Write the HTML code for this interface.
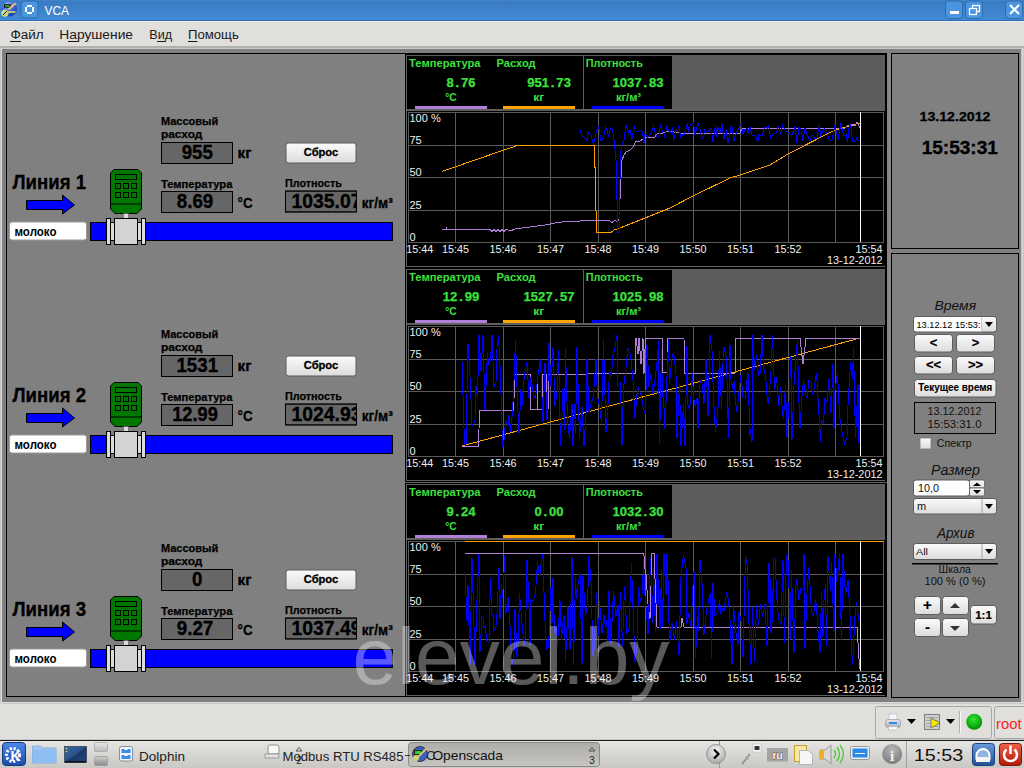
<!DOCTYPE html>
<html><head><meta charset="utf-8"><style>
html,body{margin:0;padding:0;width:1024px;height:768px;overflow:hidden;background:#e0dfdc}
svg{display:block}
text{font-family:"Liberation Sans", sans-serif}
</style></head><body>
<svg width="1024" height="768" viewBox="0 0 1024 768" shape-rendering="auto">
<rect x="0" y="0" width="1024" height="768" fill="#e0dfdc" />
<defs><linearGradient id="tb" x1="0" y1="0" x2="0" y2="1"><stop offset="0" stop-color="#3a7bc1"/><stop offset="1" stop-color="#418ad4"/></linearGradient><linearGradient id="btn" x1="0" y1="0" x2="0" y2="1"><stop offset="0" stop-color="#fbfbfb"/><stop offset="1" stop-color="#dcdcdc"/></linearGradient><linearGradient id="task" x1="0" y1="0" x2="0" y2="1"><stop offset="0" stop-color="#e6e5e2"/><stop offset="1" stop-color="#c9c8c5"/></linearGradient><radialGradient id="grn" cx="0.4" cy="0.35" r="0.6"><stop offset="0" stop-color="#5cf05c"/><stop offset="1" stop-color="#089a08"/></radialGradient></defs>
<rect x="0" y="0" width="1024" height="20" fill="url(#tb)" />
<rect x="0" y="0" width="1024" height="1" fill="#3e84cb" />
<rect x="0" y="20" width="1024" height="1" fill="#2f6db6" />
<defs><radialGradient id="glb" cx="0.4" cy="0.25" r="0.8"><stop offset="0" stop-color="#a8c0f8"/><stop offset="0.5" stop-color="#3a60e0"/><stop offset="1" stop-color="#1a38a0"/></radialGradient></defs>
<ellipse cx="9.2" cy="9" rx="7.8" ry="7.6" fill="url(#glb)"/>
<rect x="4" y="4.2" width="6.8" height="3.6" fill="#000" rx="0.8" />
<rect x="5" y="5" width="4.8" height="2" fill="#20a020" />
<line x1="8.5" y1="9.5" x2="15.8" y2="3.2" stroke="#e0b888" stroke-width="2.2" />
<circle cx="4.8" cy="13.2" r="3.6" fill="#c8d880"/>
<line x1="3" y1="15" x2="7" y2="11" stroke="#222" stroke-width="1" />
<line x1="8" y1="12" x2="15.5" y2="12" stroke="#d8e060" stroke-width="1.6" />
<rect x="21" y="1" width="17" height="17" fill="#4a94e0" stroke="#2f69a8" stroke-width="1" rx="3" />
<rect x="27" y="5" width="5" height="2" fill="#fff" />
<rect x="25" y="7" width="2" height="5" fill="#fff" />
<rect x="32" y="7" width="2" height="5" fill="#fff" />
<rect x="27" y="12" width="5" height="2" fill="#fff" />
<text x="44.5" y="14.5" font-size="12" fill="#ffffff" font-weight="normal" font-style="normal" text-anchor="start" textLength="24.6" lengthAdjust="spacingAndGlyphs" >VCA</text>
<rect x="945.5" y="1" width="17" height="17.5" fill="#4a94e0" stroke="#2f69a8" stroke-width="1" rx="3" />
<rect x="965.5" y="1" width="17" height="17.5" fill="#4a94e0" stroke="#2f69a8" stroke-width="1" rx="3" />
<rect x="1005.5" y="1" width="17" height="17.5" fill="#4a94e0" stroke="#2f69a8" stroke-width="1" rx="3" />
<rect x="950" y="11" width="9" height="3" fill="#fff" />
<rect x="972.5" y="5.5" width="7" height="6" fill="none" stroke="#fff" stroke-width="1.3" />
<rect x="969.5" y="8.5" width="7" height="6" fill="#4a94e0" stroke="#fff" stroke-width="1.3" />
<line x1="1010" y1="5" x2="1019" y2="14" stroke="#fff" stroke-width="2.2" />
<line x1="1019" y1="5" x2="1010" y2="14" stroke="#fff" stroke-width="2.2" />
<rect x="0" y="21" width="1024" height="25" fill="#e0dfdc" />
<rect x="0" y="21" width="1024" height="1" fill="#f0ece8" />
<text x="10.5" y="38.75" font-size="12" fill="#1a1a1a" font-weight="normal" font-style="normal" text-anchor="start" textLength="33.2" lengthAdjust="spacingAndGlyphs" >Файл</text>
<rect x="10" y="41" width="11" height="1" fill="#1a1a1a" />
<text x="59.25" y="38.75" font-size="12" fill="#1a1a1a" font-weight="normal" font-style="normal" text-anchor="start" textLength="73.75" lengthAdjust="spacingAndGlyphs" >Нарушение</text>
<rect x="68" y="41" width="10" height="1" fill="#1a1a1a" />
<text x="149.25" y="38.75" font-size="12" fill="#1a1a1a" font-weight="normal" font-style="normal" text-anchor="start" textLength="22.75" lengthAdjust="spacingAndGlyphs" >Вид</text>
<rect x="157" y="41" width="8" height="1" fill="#1a1a1a" />
<text x="188" y="38.75" font-size="12" fill="#1a1a1a" font-weight="normal" font-style="normal" text-anchor="start" textLength="50.75" lengthAdjust="spacingAndGlyphs" >Помощь</text>
<rect x="188" y="41" width="9.5" height="1" fill="#1a1a1a" />
<rect x="0" y="46" width="1024" height="2" fill="#b2b0ab" />
<rect x="0" y="48" width="1024" height="1" fill="#c9c9c9" />
<rect x="0" y="49" width="1024" height="654" fill="#808080" />
<rect x="0" y="48" width="2" height="655" fill="#c4c4c4" />
<rect x="1" y="48" width="1" height="655" fill="#dcdcdc" />
<rect x="1021" y="48" width="3" height="655" fill="#c4c4c4" />
<rect x="1022" y="48" width="1" height="655" fill="#dcdcdc" />
<rect x="0" y="702" width="1024" height="1" fill="#dcdcdc" />
<rect x="0" y="703" width="1024" height="1" fill="#c8c8c8" />
<rect x="6.5" y="53.5" width="399" height="643" fill="#808080" stroke="#000" stroke-width="1" />
<text x="160.9" y="124.6" font-size="11" fill="#000" font-weight="bold" font-style="normal" text-anchor="start" textLength="57.4" lengthAdjust="spacingAndGlyphs" stroke="#000" stroke-width="0.25" >Массовый</text>
<text x="160.9" y="137.5" font-size="11" fill="#000" font-weight="bold" font-style="normal" text-anchor="start" textLength="41.5" lengthAdjust="spacingAndGlyphs" stroke="#000" stroke-width="0.25" >расход</text>
<rect x="161.5" y="142.5" width="71" height="21" fill="#666666" stroke="#000" stroke-width="1" />
<text x="197.3" y="158.6" font-size="20" fill="#000" font-weight="bold" font-style="normal" text-anchor="middle" textLength="31.3" lengthAdjust="spacingAndGlyphs" stroke="#000" stroke-width="0.35" >955</text>
<text x="237.6" y="158.2" font-size="14" fill="#000" font-weight="bold" font-style="normal" text-anchor="start" textLength="14" lengthAdjust="spacingAndGlyphs" stroke="#000" stroke-width="0.3" >кг</text>
<rect x="286" y="143" width="70" height="20" fill="url(#btn)" stroke="#5a5a5a" stroke-width="1" rx="2.5" />
<text x="321" y="156" font-size="11" fill="#000" font-weight="bold" font-style="normal" text-anchor="middle" textLength="34.5" lengthAdjust="spacingAndGlyphs" stroke="#000" stroke-width="0.3" >Сброс</text>
<text x="160.9" y="187.8" font-size="11" fill="#000" font-weight="bold" font-style="normal" text-anchor="start" textLength="71.5" lengthAdjust="spacingAndGlyphs" stroke="#000" stroke-width="0.25" >Температура</text>
<rect x="161.5" y="191.5" width="71" height="21" fill="#666666" stroke="#000" stroke-width="1" />
<text x="195" y="208.1" font-size="20" fill="#000" font-weight="bold" font-style="normal" text-anchor="middle" textLength="36.5" lengthAdjust="spacingAndGlyphs" stroke="#000" stroke-width="0.35" >8.69</text>
<text x="237.6" y="208.2" font-size="14" fill="#000" font-weight="bold" font-style="normal" text-anchor="start" textLength="15" lengthAdjust="spacingAndGlyphs" stroke="#000" stroke-width="0.3" >°C</text>
<text x="285" y="186.9" font-size="11" fill="#000" font-weight="bold" font-style="normal" text-anchor="start" textLength="57" lengthAdjust="spacingAndGlyphs" stroke="#000" stroke-width="0.25" >Плотность</text>
<svg x="285" y="190.5" width="71.5" height="22" overflow="hidden">
<rect x="0.5" y="0.5" width="71" height="21" fill="#666666" stroke="#000" stroke-width="1" />
<text x="6.5" y="17.7" font-size="20" fill="#000" font-weight="bold" font-style="normal" text-anchor="start" textLength="70.0" lengthAdjust="spacingAndGlyphs" stroke="#000" stroke-width="0.35" >1035.07</text>
</svg>
<rect x="285.5" y="191" width="71" height="21" fill="none" stroke="#000" stroke-width="1" />
<text x="361.7" y="208.2" font-size="14" fill="#000" font-weight="bold" font-style="normal" text-anchor="start" textLength="31" lengthAdjust="spacingAndGlyphs" stroke="#000" stroke-width="0.3" >кг/м³</text>
<text x="12.5" y="188.9" font-size="20" fill="#000" font-weight="bold" font-style="normal" text-anchor="start" textLength="73.5" lengthAdjust="spacingAndGlyphs" stroke="#000" stroke-width="0.35" >Линия 1</text>
<polygon points="26.5,200.5 62.5,200.5 62.5,195 74.5,205 62.5,214 62.5,209.5 26.5,209.5" fill="#0000ff" stroke="#000" stroke-width="1"/>
<rect x="9.5" y="222" width="77" height="18" fill="#ffffff" stroke="#9a9a9a" stroke-width="1" rx="2.5" />
<text x="14.5" y="235.5" font-size="12" fill="#000" font-weight="bold" font-style="normal" text-anchor="start" textLength="42" lengthAdjust="spacingAndGlyphs" >молоко</text>
<rect x="90.5" y="222.5" width="302" height="18" fill="#0000ff" stroke="#000" stroke-width="1" />
<polygon points="114,169.5 138,169.5 141.5,173 141.5,209 137,213.5 115,213.5 110.5,209 110.5,173" fill="#007800" stroke="#000" stroke-width="1"/>
<rect x="115.5" y="174.5" width="21" height="5" fill="#007800" stroke="#000" stroke-width="1" />
<rect x="115.5" y="183.5" width="5" height="5" fill="#007800" stroke="#000" stroke-width="1" />
<rect x="115.5" y="192.5" width="5" height="5" fill="#007800" stroke="#000" stroke-width="1" />
<rect x="123.5" y="183.5" width="5" height="5" fill="#007800" stroke="#000" stroke-width="1" />
<rect x="123.5" y="192.5" width="5" height="5" fill="#007800" stroke="#000" stroke-width="1" />
<rect x="131.5" y="183.5" width="5" height="5" fill="#007800" stroke="#000" stroke-width="1" />
<rect x="131.5" y="192.5" width="5" height="5" fill="#007800" stroke="#000" stroke-width="1" />
<rect x="110.5" y="203.5" width="31" height="1" fill="#000" />
<rect x="123.5" y="213.5" width="5" height="5" fill="#dcdcdc" stroke="#555" stroke-width="0.6" />
<rect x="106.5" y="218.5" width="4" height="26" fill="#dcdcdc" stroke="#000" stroke-width="1" />
<rect x="110.5" y="222.5" width="4" height="18" fill="#dcdcdc" stroke="#000" stroke-width="1" />
<rect x="114.5" y="218.5" width="23" height="26" fill="#d3d3d3" stroke="#000" stroke-width="1" />
<rect x="137.5" y="222.5" width="4" height="18" fill="#dcdcdc" stroke="#000" stroke-width="1" />
<rect x="141.5" y="218.5" width="4" height="26" fill="#dcdcdc" stroke="#000" stroke-width="1" />
<text x="160.9" y="337.6" font-size="11" fill="#000" font-weight="bold" font-style="normal" text-anchor="start" textLength="57.4" lengthAdjust="spacingAndGlyphs" stroke="#000" stroke-width="0.25" >Массовый</text>
<text x="160.9" y="350.5" font-size="11" fill="#000" font-weight="bold" font-style="normal" text-anchor="start" textLength="41.5" lengthAdjust="spacingAndGlyphs" stroke="#000" stroke-width="0.25" >расход</text>
<rect x="161.5" y="355.5" width="71" height="21" fill="#666666" stroke="#000" stroke-width="1" />
<text x="197.3" y="371.6" font-size="20" fill="#000" font-weight="bold" font-style="normal" text-anchor="middle" textLength="41.7" lengthAdjust="spacingAndGlyphs" stroke="#000" stroke-width="0.35" >1531</text>
<text x="237.6" y="371.2" font-size="14" fill="#000" font-weight="bold" font-style="normal" text-anchor="start" textLength="14" lengthAdjust="spacingAndGlyphs" stroke="#000" stroke-width="0.3" >кг</text>
<rect x="286" y="356" width="70" height="20" fill="url(#btn)" stroke="#5a5a5a" stroke-width="1" rx="2.5" />
<text x="321" y="369" font-size="11" fill="#000" font-weight="bold" font-style="normal" text-anchor="middle" textLength="34.5" lengthAdjust="spacingAndGlyphs" stroke="#000" stroke-width="0.3" >Сброс</text>
<text x="160.9" y="400.8" font-size="11" fill="#000" font-weight="bold" font-style="normal" text-anchor="start" textLength="71.5" lengthAdjust="spacingAndGlyphs" stroke="#000" stroke-width="0.25" >Температура</text>
<rect x="161.5" y="404.5" width="71" height="21" fill="#666666" stroke="#000" stroke-width="1" />
<text x="195" y="421.1" font-size="20" fill="#000" font-weight="bold" font-style="normal" text-anchor="middle" textLength="45.6" lengthAdjust="spacingAndGlyphs" stroke="#000" stroke-width="0.35" >12.99</text>
<text x="237.6" y="421.2" font-size="14" fill="#000" font-weight="bold" font-style="normal" text-anchor="start" textLength="15" lengthAdjust="spacingAndGlyphs" stroke="#000" stroke-width="0.3" >°C</text>
<text x="285" y="399.9" font-size="11" fill="#000" font-weight="bold" font-style="normal" text-anchor="start" textLength="57" lengthAdjust="spacingAndGlyphs" stroke="#000" stroke-width="0.25" >Плотность</text>
<svg x="285" y="403.5" width="71.5" height="22" overflow="hidden">
<rect x="0.5" y="0.5" width="71" height="21" fill="#666666" stroke="#000" stroke-width="1" />
<text x="6.5" y="17.7" font-size="20" fill="#000" font-weight="bold" font-style="normal" text-anchor="start" textLength="70.0" lengthAdjust="spacingAndGlyphs" stroke="#000" stroke-width="0.35" >1024.93</text>
</svg>
<rect x="285.5" y="404" width="71" height="21" fill="none" stroke="#000" stroke-width="1" />
<text x="361.7" y="421.2" font-size="14" fill="#000" font-weight="bold" font-style="normal" text-anchor="start" textLength="31" lengthAdjust="spacingAndGlyphs" stroke="#000" stroke-width="0.3" >кг/м³</text>
<text x="12.5" y="401.9" font-size="20" fill="#000" font-weight="bold" font-style="normal" text-anchor="start" textLength="73.5" lengthAdjust="spacingAndGlyphs" stroke="#000" stroke-width="0.35" >Линия 2</text>
<polygon points="26.5,413.5 62.5,413.5 62.5,408 74.5,418 62.5,427 62.5,422.5 26.5,422.5" fill="#0000ff" stroke="#000" stroke-width="1"/>
<rect x="9.5" y="435" width="77" height="18" fill="#ffffff" stroke="#9a9a9a" stroke-width="1" rx="2.5" />
<text x="14.5" y="448.5" font-size="12" fill="#000" font-weight="bold" font-style="normal" text-anchor="start" textLength="42" lengthAdjust="spacingAndGlyphs" >молоко</text>
<rect x="90.5" y="435.5" width="302" height="18" fill="#0000ff" stroke="#000" stroke-width="1" />
<polygon points="114,382.5 138,382.5 141.5,386 141.5,422 137,426.5 115,426.5 110.5,422 110.5,386" fill="#007800" stroke="#000" stroke-width="1"/>
<rect x="115.5" y="387.5" width="21" height="5" fill="#007800" stroke="#000" stroke-width="1" />
<rect x="115.5" y="396.5" width="5" height="5" fill="#007800" stroke="#000" stroke-width="1" />
<rect x="115.5" y="405.5" width="5" height="5" fill="#007800" stroke="#000" stroke-width="1" />
<rect x="123.5" y="396.5" width="5" height="5" fill="#007800" stroke="#000" stroke-width="1" />
<rect x="123.5" y="405.5" width="5" height="5" fill="#007800" stroke="#000" stroke-width="1" />
<rect x="131.5" y="396.5" width="5" height="5" fill="#007800" stroke="#000" stroke-width="1" />
<rect x="131.5" y="405.5" width="5" height="5" fill="#007800" stroke="#000" stroke-width="1" />
<rect x="110.5" y="416.5" width="31" height="1" fill="#000" />
<rect x="123.5" y="426.5" width="5" height="5" fill="#dcdcdc" stroke="#555" stroke-width="0.6" />
<rect x="106.5" y="431.5" width="4" height="26" fill="#dcdcdc" stroke="#000" stroke-width="1" />
<rect x="110.5" y="435.5" width="4" height="18" fill="#dcdcdc" stroke="#000" stroke-width="1" />
<rect x="114.5" y="431.5" width="23" height="26" fill="#d3d3d3" stroke="#000" stroke-width="1" />
<rect x="137.5" y="435.5" width="4" height="18" fill="#dcdcdc" stroke="#000" stroke-width="1" />
<rect x="141.5" y="431.5" width="4" height="26" fill="#dcdcdc" stroke="#000" stroke-width="1" />
<text x="160.9" y="551.6" font-size="11" fill="#000" font-weight="bold" font-style="normal" text-anchor="start" textLength="57.4" lengthAdjust="spacingAndGlyphs" stroke="#000" stroke-width="0.25" >Массовый</text>
<text x="160.9" y="564.5" font-size="11" fill="#000" font-weight="bold" font-style="normal" text-anchor="start" textLength="41.5" lengthAdjust="spacingAndGlyphs" stroke="#000" stroke-width="0.25" >расход</text>
<rect x="161.5" y="569.5" width="71" height="21" fill="#666666" stroke="#000" stroke-width="1" />
<text x="197.3" y="585.6" font-size="20" fill="#000" font-weight="bold" font-style="normal" text-anchor="middle" textLength="10.4" lengthAdjust="spacingAndGlyphs" stroke="#000" stroke-width="0.35" >0</text>
<text x="237.6" y="585.2" font-size="14" fill="#000" font-weight="bold" font-style="normal" text-anchor="start" textLength="14" lengthAdjust="spacingAndGlyphs" stroke="#000" stroke-width="0.3" >кг</text>
<rect x="286" y="570" width="70" height="20" fill="url(#btn)" stroke="#5a5a5a" stroke-width="1" rx="2.5" />
<text x="321" y="583" font-size="11" fill="#000" font-weight="bold" font-style="normal" text-anchor="middle" textLength="34.5" lengthAdjust="spacingAndGlyphs" stroke="#000" stroke-width="0.3" >Сброс</text>
<text x="160.9" y="614.8" font-size="11" fill="#000" font-weight="bold" font-style="normal" text-anchor="start" textLength="71.5" lengthAdjust="spacingAndGlyphs" stroke="#000" stroke-width="0.25" >Температура</text>
<rect x="161.5" y="618.5" width="71" height="21" fill="#666666" stroke="#000" stroke-width="1" />
<text x="195" y="635.1" font-size="20" fill="#000" font-weight="bold" font-style="normal" text-anchor="middle" textLength="36.5" lengthAdjust="spacingAndGlyphs" stroke="#000" stroke-width="0.35" >9.27</text>
<text x="237.6" y="635.2" font-size="14" fill="#000" font-weight="bold" font-style="normal" text-anchor="start" textLength="15" lengthAdjust="spacingAndGlyphs" stroke="#000" stroke-width="0.3" >°C</text>
<text x="285" y="613.9" font-size="11" fill="#000" font-weight="bold" font-style="normal" text-anchor="start" textLength="57" lengthAdjust="spacingAndGlyphs" stroke="#000" stroke-width="0.25" >Плотность</text>
<svg x="285" y="617.5" width="71.5" height="22" overflow="hidden">
<rect x="0.5" y="0.5" width="71" height="21" fill="#666666" stroke="#000" stroke-width="1" />
<text x="6.5" y="17.7" font-size="20" fill="#000" font-weight="bold" font-style="normal" text-anchor="start" textLength="70.0" lengthAdjust="spacingAndGlyphs" stroke="#000" stroke-width="0.35" >1037.49</text>
</svg>
<rect x="285.5" y="618" width="71" height="21" fill="none" stroke="#000" stroke-width="1" />
<text x="361.7" y="635.2" font-size="14" fill="#000" font-weight="bold" font-style="normal" text-anchor="start" textLength="31" lengthAdjust="spacingAndGlyphs" stroke="#000" stroke-width="0.3" >кг/м³</text>
<text x="12.5" y="615.9" font-size="20" fill="#000" font-weight="bold" font-style="normal" text-anchor="start" textLength="73.5" lengthAdjust="spacingAndGlyphs" stroke="#000" stroke-width="0.35" >Линия 3</text>
<polygon points="26.5,627.5 62.5,627.5 62.5,622 74.5,632 62.5,641 62.5,636.5 26.5,636.5" fill="#0000ff" stroke="#000" stroke-width="1"/>
<rect x="9.5" y="649" width="77" height="18" fill="#ffffff" stroke="#9a9a9a" stroke-width="1" rx="2.5" />
<text x="14.5" y="662.5" font-size="12" fill="#000" font-weight="bold" font-style="normal" text-anchor="start" textLength="42" lengthAdjust="spacingAndGlyphs" >молоко</text>
<rect x="90.5" y="649.5" width="302" height="18" fill="#0000ff" stroke="#000" stroke-width="1" />
<polygon points="114,596.5 138,596.5 141.5,600 141.5,636 137,640.5 115,640.5 110.5,636 110.5,600" fill="#007800" stroke="#000" stroke-width="1"/>
<rect x="115.5" y="601.5" width="21" height="5" fill="#007800" stroke="#000" stroke-width="1" />
<rect x="115.5" y="610.5" width="5" height="5" fill="#007800" stroke="#000" stroke-width="1" />
<rect x="115.5" y="619.5" width="5" height="5" fill="#007800" stroke="#000" stroke-width="1" />
<rect x="123.5" y="610.5" width="5" height="5" fill="#007800" stroke="#000" stroke-width="1" />
<rect x="123.5" y="619.5" width="5" height="5" fill="#007800" stroke="#000" stroke-width="1" />
<rect x="131.5" y="610.5" width="5" height="5" fill="#007800" stroke="#000" stroke-width="1" />
<rect x="131.5" y="619.5" width="5" height="5" fill="#007800" stroke="#000" stroke-width="1" />
<rect x="110.5" y="630.5" width="31" height="1" fill="#000" />
<rect x="123.5" y="640.5" width="5" height="5" fill="#dcdcdc" stroke="#555" stroke-width="0.6" />
<rect x="106.5" y="645.5" width="4" height="26" fill="#dcdcdc" stroke="#000" stroke-width="1" />
<rect x="110.5" y="649.5" width="4" height="18" fill="#dcdcdc" stroke="#000" stroke-width="1" />
<rect x="114.5" y="645.5" width="23" height="26" fill="#d3d3d3" stroke="#000" stroke-width="1" />
<rect x="137.5" y="649.5" width="4" height="18" fill="#dcdcdc" stroke="#000" stroke-width="1" />
<rect x="141.5" y="645.5" width="4" height="26" fill="#dcdcdc" stroke="#000" stroke-width="1" />
<rect x="405" y="53" width="482" height="644" fill="#000" />
<rect x="887" y="53" width="4" height="644" fill="#868686" />
<rect x="406" y="55" width="479" height="1" fill="#5f5f5f" />
<rect x="406" y="55" width="1" height="212" fill="#5f5f5f" />
<rect x="406" y="266" width="479" height="1" fill="#5f5f5f" />
<rect x="407" y="56" width="265" height="53" fill="#000" />
<rect x="672" y="56" width="213" height="53" fill="#5d5d5d" />
<line x1="583.5" y1="56" x2="583.5" y2="109" stroke="#5f5f5f" stroke-width="1" />
<rect x="407" y="109" width="478" height="2" fill="#5f5f5f" />
<text x="409.1" y="66.8" font-size="11" fill="#3ee03e" font-weight="bold" font-style="normal" text-anchor="start" textLength="71.5" lengthAdjust="spacingAndGlyphs" >Температура</text>
<text x="496.6" y="66.8" font-size="11" fill="#3ee03e" font-weight="bold" font-style="normal" text-anchor="start" textLength="39" lengthAdjust="spacingAndGlyphs" >Расход</text>
<text x="585.8" y="66.8" font-size="11" fill="#3ee03e" font-weight="bold" font-style="normal" text-anchor="start" textLength="57" lengthAdjust="spacingAndGlyphs" >Плотность</text>
<text x="446.44 455.54 461.04 468.34" y="86.6" font-size="13" fill="#3ee03e" font-weight="bold" stroke="#3ee03e" stroke-width="0.25">8.76</text>
<text x="527.14 534.44 541.74 550.84 556.34 563.64" y="86.6" font-size="13" fill="#3ee03e" font-weight="bold" stroke="#3ee03e" stroke-width="0.25">951.73</text>
<text x="612.49 619.79 627.09 634.39 643.49 648.99 656.29" y="86.6" font-size="13" fill="#3ee03e" font-weight="bold" stroke="#3ee03e" stroke-width="0.25">1037.83</text>
<text x="451" y="100.5" font-size="11" fill="#3ee03e" font-weight="bold" font-style="normal" text-anchor="middle" textLength="11.5" lengthAdjust="spacingAndGlyphs" >°C</text>
<text x="538.7" y="100.5" font-size="11" fill="#3ee03e" font-weight="bold" font-style="normal" text-anchor="middle" textLength="11" lengthAdjust="spacingAndGlyphs" >кг</text>
<text x="628.5" y="100.5" font-size="11" fill="#3ee03e" font-weight="bold" font-style="normal" text-anchor="middle" textLength="25" lengthAdjust="spacingAndGlyphs" >кг/м³</text>
<rect x="415" y="106" width="72" height="3" fill="#b27fd6" />
<rect x="503" y="106" width="72" height="3" fill="#ffa300" />
<rect x="592" y="106" width="72" height="3" fill="#0000ff" />
<line x1="408.5" y1="112" x2="408.5" y2="243" stroke="#5a5a5a" stroke-width="1" />
<line x1="455.5" y1="112" x2="455.5" y2="243" stroke="#5a5a5a" stroke-width="1" />
<line x1="503.5" y1="112" x2="503.5" y2="243" stroke="#5a5a5a" stroke-width="1" />
<line x1="550.5" y1="112" x2="550.5" y2="243" stroke="#5a5a5a" stroke-width="1" />
<line x1="598.5" y1="112" x2="598.5" y2="243" stroke="#5a5a5a" stroke-width="1" />
<line x1="645.5" y1="112" x2="645.5" y2="243" stroke="#5a5a5a" stroke-width="1" />
<line x1="693.5" y1="112" x2="693.5" y2="243" stroke="#5a5a5a" stroke-width="1" />
<line x1="740.5" y1="112" x2="740.5" y2="243" stroke="#5a5a5a" stroke-width="1" />
<line x1="788.5" y1="112" x2="788.5" y2="243" stroke="#5a5a5a" stroke-width="1" />
<line x1="835.5" y1="112" x2="835.5" y2="243" stroke="#5a5a5a" stroke-width="1" />
<line x1="883.5" y1="112" x2="883.5" y2="243" stroke="#5a5a5a" stroke-width="1" />
<line x1="408" y1="112.5" x2="884" y2="112.5" stroke="#5a5a5a" stroke-width="1" />
<line x1="408" y1="145.5" x2="884" y2="145.5" stroke="#5a5a5a" stroke-width="1" />
<line x1="408" y1="177.5" x2="884" y2="177.5" stroke="#5a5a5a" stroke-width="1" />
<line x1="408" y1="210.5" x2="884" y2="210.5" stroke="#5a5a5a" stroke-width="1" />
<line x1="408" y1="242.5" x2="884" y2="242.5" stroke="#5a5a5a" stroke-width="1" />
<text x="409.5" y="122" font-size="11" fill="#f0f0f0" font-weight="normal" font-style="normal" text-anchor="start" >100 %</text>
<text x="409.5" y="143.8" font-size="11" fill="#f0f0f0" font-weight="normal" font-style="normal" text-anchor="start" >75</text>
<text x="409.5" y="175.5" font-size="11" fill="#f0f0f0" font-weight="normal" font-style="normal" text-anchor="start" >50</text>
<text x="409.5" y="208.8" font-size="11" fill="#f0f0f0" font-weight="normal" font-style="normal" text-anchor="start" >25</text>
<text x="409.5" y="240.6" font-size="11" fill="#f0f0f0" font-weight="normal" font-style="normal" text-anchor="start" >0</text>
<text x="406.3" y="252.8" font-size="11" fill="#f0f0f0" font-weight="normal" font-style="normal" text-anchor="start" textLength="27" lengthAdjust="spacingAndGlyphs" >15:44</text>
<text x="455.5" y="252.8" font-size="11" fill="#f0f0f0" font-weight="normal" font-style="normal" text-anchor="middle" textLength="27" lengthAdjust="spacingAndGlyphs" >15:45</text>
<text x="503.0" y="252.8" font-size="11" fill="#f0f0f0" font-weight="normal" font-style="normal" text-anchor="middle" textLength="27" lengthAdjust="spacingAndGlyphs" >15:46</text>
<text x="550.5" y="252.8" font-size="11" fill="#f0f0f0" font-weight="normal" font-style="normal" text-anchor="middle" textLength="27" lengthAdjust="spacingAndGlyphs" >15:47</text>
<text x="598.0" y="252.8" font-size="11" fill="#f0f0f0" font-weight="normal" font-style="normal" text-anchor="middle" textLength="27" lengthAdjust="spacingAndGlyphs" >15:48</text>
<text x="645.5" y="252.8" font-size="11" fill="#f0f0f0" font-weight="normal" font-style="normal" text-anchor="middle" textLength="27" lengthAdjust="spacingAndGlyphs" >15:49</text>
<text x="693.0" y="252.8" font-size="11" fill="#f0f0f0" font-weight="normal" font-style="normal" text-anchor="middle" textLength="27" lengthAdjust="spacingAndGlyphs" >15:50</text>
<text x="740.5" y="252.8" font-size="11" fill="#f0f0f0" font-weight="normal" font-style="normal" text-anchor="middle" textLength="27" lengthAdjust="spacingAndGlyphs" >15:51</text>
<text x="788.0" y="252.8" font-size="11" fill="#f0f0f0" font-weight="normal" font-style="normal" text-anchor="middle" textLength="27" lengthAdjust="spacingAndGlyphs" >15:52</text>
<text x="882.5" y="252.8" font-size="11" fill="#f0f0f0" font-weight="normal" font-style="normal" text-anchor="end" textLength="27" lengthAdjust="spacingAndGlyphs" >15:54</text>
<text x="882.5" y="263.5" font-size="11" fill="#f0f0f0" font-weight="normal" font-style="normal" text-anchor="end" textLength="55.5" lengthAdjust="spacingAndGlyphs" >13-12-2012</text>
<polyline points="442.0,171.5 475.0,160.0 517.0,145.5 594.6,145.5 595.0,167.0 595.6,167.0 596.0,211.0 596.5,232.6 610.6,232.6 615.0,229.5 620.0,228.0 645.0,218.0 670.0,208.0 693.0,196.0 730.0,178.0 740.0,175.0 770.0,165.0 788.0,154.0 835.0,130.0 860.0,123.0" fill="none" stroke="#ffa000" stroke-width="1" stroke-linejoin="miter" shape-rendering="crispEdges" />
<polyline points="442.0,229.0 446.0,229.0 446.0,227.0 447.0,229.0 490.0,229.0 492.0,232.0 494.0,229.0 496.0,232.0 498.0,229.0 500.0,232.0 502.0,229.0 504.0,232.0 506.0,229.0 510.0,231.0 515.0,229.0 530.0,227.0 545.0,225.0 555.0,223.0 570.0,221.0 580.0,221.0 590.0,220.4 609.0,220.4 612.0,222.5 615.0,220.0 617.0,222.0 619.0,219.0 620.0,200.0 621.0,177.0 622.0,160.0 624.0,155.0 626.0,152.0 630.0,150.0 633.0,147.0 635.0,143.0 636.0,141.0 640.0,141.0 643.0,139.0 645.0,137.0 655.0,137.0 658.0,133.0 663.0,133.0 668.0,131.0 680.0,133.0 740.0,133.0 742.0,128.0 845.0,128.0 850.0,124.0 855.0,126.0 857.0,122.0 860.0,128.0" fill="none" stroke="#b27fd6" stroke-width="1" stroke-linejoin="miter" shape-rendering="crispEdges" />
<polyline points="580.0,129.8 582.0,136.0 584.5,137.1 587.0,141.0 588.0,132.5 591.0,135.2 593.5,144.4 596.0,133.4 598.5,125.8 601.0,141.2 603.5,137.1 605.5,127.3 607.5,130.4 608.5,137.2 610.5,127.5 612.5,129.9 614.0,140.0 616.0,160.0 617.0,200.0 618.0,232.0 619.5,232.0 620.0,180.0 621.0,150.0 622.0,145.0 624.0,140.0 626.0,124.7 629.0,132.9 630.0,130.3 632.0,139.5 634.0,126.6 636.0,130.8 637.5,131.8 640.5,130.4 642.5,131.6 644.0,143.4 645.0,134.1 648.0,137.3 649.0,136.0 651.5,132.8 653.5,126.5 655.5,134.1 657.5,137.1 659.0,137.2 660.5,123.7 662.0,130.3 664.5,136.5 667.0,126.2 668.0,129.6 670.0,132.7 672.5,127.7 673.5,141.6 676.0,130.3 677.5,130.7 678.5,125.5 681.0,137.7 682.5,135.0 684.5,134.3 687.5,123.0 688.5,131.5 690.5,124.7 693.5,123.0 695.0,134.7 698.0,123.4 700.0,129.0 702.0,138.4 703.0,136.8 705.0,128.7 706.0,131.6 708.0,131.9 711.0,128.0 713.0,142.0 715.5,124.7 717.0,136.7 718.0,126.9 720.0,133.1 722.0,123.6 724.0,139.3 726.0,129.7 728.0,142.6 729.5,136.2 731.5,124.6 732.5,130.4 734.0,140.5 735.5,135.1 738.5,129.2 741.0,123.9 743.0,133.5 745.0,129.6 747.0,128.4 748.0,133.4 749.0,129.6 750.0,127.1 752.0,135.0 755.0,135.6 758.0,141.5 759.0,134.5 762.0,136.2 764.5,127.4 767.5,128.1 768.5,125.1 770.5,138.0 773.5,133.4 776.5,132.7 778.5,125.7 780.5,134.4 782.5,125.4 785.5,131.2 787.5,131.8 789.5,133.0 791.5,135.7 793.5,131.5 795.0,126.4 797.0,143.2 799.0,127.1 801.0,129.8 803.0,140.6 805.0,128.1 807.5,135.2 810.0,141.3 812.0,134.7 814.5,138.2 817.0,138.2 819.5,123.8 820.5,137.4 822.5,130.9 824.5,129.0 826.5,133.2 827.5,135.2 829.0,138.7 830.0,140.7 832.0,139.8 835.0,125.5 838.0,139.5 841.0,123.1 843.5,135.8 846.0,134.2 847.5,143.0 849.5,123.0 851.0,127.4 852.5,141.6 855.5,141.9 856.5,137.7 858.5,141.4" fill="none" stroke="#0000ff" stroke-width="1" stroke-linejoin="miter" shape-rendering="crispEdges" />
<line x1="860.5" y1="112" x2="860.5" y2="242" stroke="#ffffff" stroke-width="1" />
<rect x="406" y="269" width="479" height="1" fill="#5f5f5f" />
<rect x="406" y="269" width="1" height="212" fill="#5f5f5f" />
<rect x="406" y="480" width="479" height="1" fill="#5f5f5f" />
<rect x="407" y="270" width="265" height="53" fill="#000" />
<rect x="672" y="270" width="213" height="53" fill="#5d5d5d" />
<line x1="583.5" y1="270" x2="583.5" y2="323" stroke="#5f5f5f" stroke-width="1" />
<rect x="407" y="323" width="478" height="2" fill="#5f5f5f" />
<text x="409.1" y="280.8" font-size="11" fill="#3ee03e" font-weight="bold" font-style="normal" text-anchor="start" textLength="71.5" lengthAdjust="spacingAndGlyphs" >Температура</text>
<text x="496.6" y="280.8" font-size="11" fill="#3ee03e" font-weight="bold" font-style="normal" text-anchor="start" textLength="39" lengthAdjust="spacingAndGlyphs" >Расход</text>
<text x="585.8" y="280.8" font-size="11" fill="#3ee03e" font-weight="bold" font-style="normal" text-anchor="start" textLength="57" lengthAdjust="spacingAndGlyphs" >Плотность</text>
<text x="442.79 450.09 459.19 464.69 471.99" y="300.6" font-size="13" fill="#3ee03e" font-weight="bold" stroke="#3ee03e" stroke-width="0.25">12.99</text>
<text x="523.49 530.79 538.09 545.39 554.49 559.99 567.29" y="300.6" font-size="13" fill="#3ee03e" font-weight="bold" stroke="#3ee03e" stroke-width="0.25">1527.57</text>
<text x="612.49 619.79 627.09 634.39 643.49 648.99 656.29" y="300.6" font-size="13" fill="#3ee03e" font-weight="bold" stroke="#3ee03e" stroke-width="0.25">1025.98</text>
<text x="451" y="314.5" font-size="11" fill="#3ee03e" font-weight="bold" font-style="normal" text-anchor="middle" textLength="11.5" lengthAdjust="spacingAndGlyphs" >°C</text>
<text x="538.7" y="314.5" font-size="11" fill="#3ee03e" font-weight="bold" font-style="normal" text-anchor="middle" textLength="11" lengthAdjust="spacingAndGlyphs" >кг</text>
<text x="628.5" y="314.5" font-size="11" fill="#3ee03e" font-weight="bold" font-style="normal" text-anchor="middle" textLength="25" lengthAdjust="spacingAndGlyphs" >кг/м³</text>
<rect x="415" y="320" width="72" height="3" fill="#b27fd6" />
<rect x="503" y="320" width="72" height="3" fill="#ffa300" />
<rect x="592" y="320" width="72" height="3" fill="#0000ff" />
<line x1="408.5" y1="326" x2="408.5" y2="457" stroke="#5a5a5a" stroke-width="1" />
<line x1="455.5" y1="326" x2="455.5" y2="457" stroke="#5a5a5a" stroke-width="1" />
<line x1="503.5" y1="326" x2="503.5" y2="457" stroke="#5a5a5a" stroke-width="1" />
<line x1="550.5" y1="326" x2="550.5" y2="457" stroke="#5a5a5a" stroke-width="1" />
<line x1="598.5" y1="326" x2="598.5" y2="457" stroke="#5a5a5a" stroke-width="1" />
<line x1="645.5" y1="326" x2="645.5" y2="457" stroke="#5a5a5a" stroke-width="1" />
<line x1="693.5" y1="326" x2="693.5" y2="457" stroke="#5a5a5a" stroke-width="1" />
<line x1="740.5" y1="326" x2="740.5" y2="457" stroke="#5a5a5a" stroke-width="1" />
<line x1="788.5" y1="326" x2="788.5" y2="457" stroke="#5a5a5a" stroke-width="1" />
<line x1="835.5" y1="326" x2="835.5" y2="457" stroke="#5a5a5a" stroke-width="1" />
<line x1="883.5" y1="326" x2="883.5" y2="457" stroke="#5a5a5a" stroke-width="1" />
<line x1="408" y1="326.5" x2="884" y2="326.5" stroke="#5a5a5a" stroke-width="1" />
<line x1="408" y1="359.5" x2="884" y2="359.5" stroke="#5a5a5a" stroke-width="1" />
<line x1="408" y1="391.5" x2="884" y2="391.5" stroke="#5a5a5a" stroke-width="1" />
<line x1="408" y1="424.5" x2="884" y2="424.5" stroke="#5a5a5a" stroke-width="1" />
<line x1="408" y1="456.5" x2="884" y2="456.5" stroke="#5a5a5a" stroke-width="1" />
<text x="409.5" y="336" font-size="11" fill="#f0f0f0" font-weight="normal" font-style="normal" text-anchor="start" >100 %</text>
<text x="409.5" y="357.8" font-size="11" fill="#f0f0f0" font-weight="normal" font-style="normal" text-anchor="start" >75</text>
<text x="409.5" y="389.5" font-size="11" fill="#f0f0f0" font-weight="normal" font-style="normal" text-anchor="start" >50</text>
<text x="409.5" y="422.8" font-size="11" fill="#f0f0f0" font-weight="normal" font-style="normal" text-anchor="start" >25</text>
<text x="409.5" y="454.6" font-size="11" fill="#f0f0f0" font-weight="normal" font-style="normal" text-anchor="start" >0</text>
<text x="406.3" y="466.8" font-size="11" fill="#f0f0f0" font-weight="normal" font-style="normal" text-anchor="start" textLength="27" lengthAdjust="spacingAndGlyphs" >15:44</text>
<text x="455.5" y="466.8" font-size="11" fill="#f0f0f0" font-weight="normal" font-style="normal" text-anchor="middle" textLength="27" lengthAdjust="spacingAndGlyphs" >15:45</text>
<text x="503.0" y="466.8" font-size="11" fill="#f0f0f0" font-weight="normal" font-style="normal" text-anchor="middle" textLength="27" lengthAdjust="spacingAndGlyphs" >15:46</text>
<text x="550.5" y="466.8" font-size="11" fill="#f0f0f0" font-weight="normal" font-style="normal" text-anchor="middle" textLength="27" lengthAdjust="spacingAndGlyphs" >15:47</text>
<text x="598.0" y="466.8" font-size="11" fill="#f0f0f0" font-weight="normal" font-style="normal" text-anchor="middle" textLength="27" lengthAdjust="spacingAndGlyphs" >15:48</text>
<text x="645.5" y="466.8" font-size="11" fill="#f0f0f0" font-weight="normal" font-style="normal" text-anchor="middle" textLength="27" lengthAdjust="spacingAndGlyphs" >15:49</text>
<text x="693.0" y="466.8" font-size="11" fill="#f0f0f0" font-weight="normal" font-style="normal" text-anchor="middle" textLength="27" lengthAdjust="spacingAndGlyphs" >15:50</text>
<text x="740.5" y="466.8" font-size="11" fill="#f0f0f0" font-weight="normal" font-style="normal" text-anchor="middle" textLength="27" lengthAdjust="spacingAndGlyphs" >15:51</text>
<text x="788.0" y="466.8" font-size="11" fill="#f0f0f0" font-weight="normal" font-style="normal" text-anchor="middle" textLength="27" lengthAdjust="spacingAndGlyphs" >15:52</text>
<text x="882.5" y="466.8" font-size="11" fill="#f0f0f0" font-weight="normal" font-style="normal" text-anchor="end" textLength="27" lengthAdjust="spacingAndGlyphs" >15:54</text>
<text x="882.5" y="477.5" font-size="11" fill="#f0f0f0" font-weight="normal" font-style="normal" text-anchor="end" textLength="55.5" lengthAdjust="spacingAndGlyphs" >13-12-2012</text>
<polyline points="462.0,446.0 860.0,338.0" fill="none" stroke="#ffa000" stroke-width="1" stroke-linejoin="miter" shape-rendering="crispEdges" />
<polyline points="462.0,446.0 478.7,446.0 479.0,429.0 480.0,410.6 513.4,410.6 514.0,399.0 515.0,374.5 530.3,374.5 530.6,409.0 537.0,409.0 537.0,384.0 538.0,409.0 542.0,409.0 543.0,374.5 546.0,374.5 546.0,409.0 548.0,409.0 549.0,374.5 635.3,373.4 636.0,338.2 638.0,354.0 639.0,338.2 641.0,364.0 643.0,338.2 644.0,374.0 645.0,349.0 646.0,338.2 662.8,338.2 663.0,372.0 667.9,372.0 668.0,338.2 684.0,338.2 684.5,373.4 735.0,373.4 736.0,338.2 800.0,338.2 803.0,364.0 806.0,338.2 860.0,338.2" fill="none" stroke="#b27fd6" stroke-width="1" stroke-linejoin="miter" shape-rendering="crispEdges" />
<polyline points="462.0,361.8 464.5,444.6 466.0,445.7 468.0,343.6 470.5,385.7 472.0,425.4 474.0,422.8 475.0,420.6 476.0,386.4 477.5,398.3 479.0,335.0 481.0,370.9 483.0,335.0 485.0,410.4 487.5,351.6 488.5,363.7 490.5,360.3 492.0,335.0 494.0,387.1 496.0,381.9 497.0,348.7 498.5,335.0 500.5,376.1 502.5,446.0 503.5,446.0 505.5,421.3 508.0,426.1 509.0,415.3 511.0,432.3 513.5,394.7 515.5,339.7 517.5,401.8 519.0,433.4 521.0,389.5 522.0,404.8 524.5,374.2 527.0,362.5 529.0,398.0 531.0,377.0 533.5,395.9 535.5,398.1 538.0,375.4 540.5,358.7 543.0,421.9 545.0,362.9 547.0,419.6 549.0,343.1 551.0,386.0 553.0,348.1 555.0,405.6 557.0,392.4 558.5,349.6 560.5,446.0 563.0,389.4 564.5,430.0 565.5,348.4 567.5,420.1 569.5,437.9 572.0,403.8 573.0,446.0 574.5,404.5 575.5,434.2 577.0,347.5 579.5,438.4 582.0,406.9 584.0,446.0 586.0,414.1 587.0,358.7 589.0,412.4 591.5,402.4 593.5,394.8 596.0,359.1 597.5,396.6 599.0,403.6 601.5,422.7 603.5,339.4 606.0,432.6 608.0,404.6 609.5,370.3 611.5,376.5 612.5,357.5 614.5,349.6 617.0,335.0 618.0,386.2 620.5,382.8 622.0,446.0 623.5,388.3 625.5,371.5 628.0,347.8 630.5,354.2 633.0,380.6 635.0,418.4 637.5,388.5 638.5,388.0 641.0,394.9 643.5,408.9 645.5,413.7 647.0,345.0 649.0,386.8 651.0,374.0 653.0,394.2 655.5,375.6 657.5,358.0 658.5,341.5 659.5,444.4 661.5,350.3 662.5,396.4 663.5,397.0 665.0,428.7 666.5,388.9 668.5,340.1 669.5,383.9 672.0,357.7 673.5,351.8 676.0,373.7 677.0,438.0 679.5,383.5 681.0,446.0 683.5,403.2 685.0,446.0 687.0,346.3 688.0,405.1 689.0,408.4 690.5,403.8 692.5,373.4 693.5,397.7 695.5,407.4 697.0,397.6 698.0,429.0 699.5,384.8 701.5,378.8 704.0,403.6 706.0,359.0 708.0,415.8 710.0,335.0 712.0,350.1 713.5,397.7 715.5,432.1 718.0,409.0 719.5,351.5 721.5,410.3 722.5,370.5 724.0,347.5 726.0,355.4 727.0,379.2 728.5,437.8 730.0,344.8 731.0,380.2 733.0,388.8 734.0,381.1 736.0,405.5 737.0,411.7 739.0,392.3 741.0,374.7 743.0,396.8 745.5,397.8 746.5,387.5 747.5,372.4 748.5,375.0 749.5,436.2 750.5,429.4 752.0,442.1 753.0,335.0 754.5,370.3 756.5,355.4 758.5,375.3 760.0,373.2 762.0,335.0 763.5,367.4 765.5,375.5 767.5,401.3 768.5,403.5 771.0,370.8 772.5,335.0 774.5,390.0 776.5,377.4 779.0,406.3 780.5,386.7 782.5,412.1 783.5,419.1 785.5,385.1 787.0,437.1 789.0,401.8 791.0,355.6 792.0,439.9 794.0,384.8 796.5,349.6 797.5,340.4 798.5,389.9 800.0,427.8 802.0,396.5 803.5,380.2 805.5,395.3 807.0,397.8 809.0,380.1 811.0,382.1 812.5,394.7 814.5,386.5 816.5,373.0 818.0,397.5 820.5,441.7 821.5,419.4 823.5,424.3 825.0,398.4 827.0,401.5 829.0,378.9 831.0,413.0 833.0,364.5 834.0,429.3 835.0,390.2 837.5,373.2 839.5,415.2 842.0,431.9 844.5,443.8 847.0,438.0 848.0,405.1 850.5,362.4 852.5,378.9 853.5,347.1 855.5,438.3 858.0,384.1 859.0,442.6 860.0,384.3" fill="none" stroke="#0000ff" stroke-width="1" stroke-linejoin="miter" shape-rendering="crispEdges" />
<line x1="860.5" y1="326" x2="860.5" y2="456" stroke="#ffffff" stroke-width="1" />
<rect x="406" y="484" width="479" height="1" fill="#5f5f5f" />
<rect x="406" y="484" width="1" height="212" fill="#5f5f5f" />
<rect x="406" y="695" width="479" height="1" fill="#5f5f5f" />
<rect x="407" y="485" width="265" height="53" fill="#000" />
<rect x="672" y="485" width="213" height="53" fill="#5d5d5d" />
<line x1="583.5" y1="485" x2="583.5" y2="538" stroke="#5f5f5f" stroke-width="1" />
<rect x="407" y="538" width="478" height="2" fill="#5f5f5f" />
<text x="409.1" y="495.8" font-size="11" fill="#3ee03e" font-weight="bold" font-style="normal" text-anchor="start" textLength="71.5" lengthAdjust="spacingAndGlyphs" >Температура</text>
<text x="496.6" y="495.8" font-size="11" fill="#3ee03e" font-weight="bold" font-style="normal" text-anchor="start" textLength="39" lengthAdjust="spacingAndGlyphs" >Расход</text>
<text x="585.8" y="495.8" font-size="11" fill="#3ee03e" font-weight="bold" font-style="normal" text-anchor="start" textLength="57" lengthAdjust="spacingAndGlyphs" >Плотность</text>
<text x="446.44 455.54 461.04 468.34" y="515.6" font-size="13" fill="#3ee03e" font-weight="bold" stroke="#3ee03e" stroke-width="0.25">9.24</text>
<text x="534.44 543.54 549.04 556.34" y="515.6" font-size="13" fill="#3ee03e" font-weight="bold" stroke="#3ee03e" stroke-width="0.25">0.00</text>
<text x="612.49 619.79 627.09 634.39 643.49 648.99 656.29" y="515.6" font-size="13" fill="#3ee03e" font-weight="bold" stroke="#3ee03e" stroke-width="0.25">1032.30</text>
<text x="451" y="529.5" font-size="11" fill="#3ee03e" font-weight="bold" font-style="normal" text-anchor="middle" textLength="11.5" lengthAdjust="spacingAndGlyphs" >°C</text>
<text x="538.7" y="529.5" font-size="11" fill="#3ee03e" font-weight="bold" font-style="normal" text-anchor="middle" textLength="11" lengthAdjust="spacingAndGlyphs" >кг</text>
<text x="628.5" y="529.5" font-size="11" fill="#3ee03e" font-weight="bold" font-style="normal" text-anchor="middle" textLength="25" lengthAdjust="spacingAndGlyphs" >кг/м³</text>
<rect x="415" y="535" width="72" height="3" fill="#b27fd6" />
<rect x="503" y="535" width="72" height="3" fill="#ffa300" />
<rect x="592" y="535" width="72" height="3" fill="#0000ff" />
<line x1="408.5" y1="541" x2="408.5" y2="672" stroke="#5a5a5a" stroke-width="1" />
<line x1="455.5" y1="541" x2="455.5" y2="672" stroke="#5a5a5a" stroke-width="1" />
<line x1="503.5" y1="541" x2="503.5" y2="672" stroke="#5a5a5a" stroke-width="1" />
<line x1="550.5" y1="541" x2="550.5" y2="672" stroke="#5a5a5a" stroke-width="1" />
<line x1="598.5" y1="541" x2="598.5" y2="672" stroke="#5a5a5a" stroke-width="1" />
<line x1="645.5" y1="541" x2="645.5" y2="672" stroke="#5a5a5a" stroke-width="1" />
<line x1="693.5" y1="541" x2="693.5" y2="672" stroke="#5a5a5a" stroke-width="1" />
<line x1="740.5" y1="541" x2="740.5" y2="672" stroke="#5a5a5a" stroke-width="1" />
<line x1="788.5" y1="541" x2="788.5" y2="672" stroke="#5a5a5a" stroke-width="1" />
<line x1="835.5" y1="541" x2="835.5" y2="672" stroke="#5a5a5a" stroke-width="1" />
<line x1="883.5" y1="541" x2="883.5" y2="672" stroke="#5a5a5a" stroke-width="1" />
<line x1="408" y1="541.5" x2="884" y2="541.5" stroke="#5a5a5a" stroke-width="1" />
<line x1="408" y1="574.5" x2="884" y2="574.5" stroke="#5a5a5a" stroke-width="1" />
<line x1="408" y1="606.5" x2="884" y2="606.5" stroke="#5a5a5a" stroke-width="1" />
<line x1="408" y1="639.5" x2="884" y2="639.5" stroke="#5a5a5a" stroke-width="1" />
<line x1="408" y1="671.5" x2="884" y2="671.5" stroke="#5a5a5a" stroke-width="1" />
<text x="409.5" y="551" font-size="11" fill="#f0f0f0" font-weight="normal" font-style="normal" text-anchor="start" >100 %</text>
<text x="409.5" y="572.8" font-size="11" fill="#f0f0f0" font-weight="normal" font-style="normal" text-anchor="start" >75</text>
<text x="409.5" y="604.5" font-size="11" fill="#f0f0f0" font-weight="normal" font-style="normal" text-anchor="start" >50</text>
<text x="409.5" y="637.8" font-size="11" fill="#f0f0f0" font-weight="normal" font-style="normal" text-anchor="start" >25</text>
<text x="409.5" y="669.6" font-size="11" fill="#f0f0f0" font-weight="normal" font-style="normal" text-anchor="start" >0</text>
<text x="406.3" y="681.8" font-size="11" fill="#f0f0f0" font-weight="normal" font-style="normal" text-anchor="start" textLength="27" lengthAdjust="spacingAndGlyphs" >15:44</text>
<text x="455.5" y="681.8" font-size="11" fill="#f0f0f0" font-weight="normal" font-style="normal" text-anchor="middle" textLength="27" lengthAdjust="spacingAndGlyphs" >15:45</text>
<text x="503.0" y="681.8" font-size="11" fill="#f0f0f0" font-weight="normal" font-style="normal" text-anchor="middle" textLength="27" lengthAdjust="spacingAndGlyphs" >15:46</text>
<text x="550.5" y="681.8" font-size="11" fill="#f0f0f0" font-weight="normal" font-style="normal" text-anchor="middle" textLength="27" lengthAdjust="spacingAndGlyphs" >15:47</text>
<text x="598.0" y="681.8" font-size="11" fill="#f0f0f0" font-weight="normal" font-style="normal" text-anchor="middle" textLength="27" lengthAdjust="spacingAndGlyphs" >15:48</text>
<text x="645.5" y="681.8" font-size="11" fill="#f0f0f0" font-weight="normal" font-style="normal" text-anchor="middle" textLength="27" lengthAdjust="spacingAndGlyphs" >15:49</text>
<text x="693.0" y="681.8" font-size="11" fill="#f0f0f0" font-weight="normal" font-style="normal" text-anchor="middle" textLength="27" lengthAdjust="spacingAndGlyphs" >15:50</text>
<text x="740.5" y="681.8" font-size="11" fill="#f0f0f0" font-weight="normal" font-style="normal" text-anchor="middle" textLength="27" lengthAdjust="spacingAndGlyphs" >15:51</text>
<text x="788.0" y="681.8" font-size="11" fill="#f0f0f0" font-weight="normal" font-style="normal" text-anchor="middle" textLength="27" lengthAdjust="spacingAndGlyphs" >15:52</text>
<text x="882.5" y="681.8" font-size="11" fill="#f0f0f0" font-weight="normal" font-style="normal" text-anchor="end" textLength="27" lengthAdjust="spacingAndGlyphs" >15:54</text>
<text x="882.5" y="692.5" font-size="11" fill="#f0f0f0" font-weight="normal" font-style="normal" text-anchor="end" textLength="55.5" lengthAdjust="spacingAndGlyphs" >13-12-2012</text>
<polyline points="465.0,541.5 884.0,541.5" fill="none" stroke="#ffa000" stroke-width="1" stroke-linejoin="miter" shape-rendering="crispEdges" />
<polyline points="465.0,553.3 643.8,553.3 645.0,569.0 646.0,575.0 648.0,604.0 650.0,619.0 652.0,553.0 654.0,553.0 655.0,579.0 657.0,627.0 681.0,627.0 682.0,618.0 684.0,627.0 857.0,627.0 859.0,659.0 860.0,669.0" fill="none" stroke="#b27fd6" stroke-width="1" stroke-linejoin="miter" shape-rendering="crispEdges" />
<polyline points="465.0,571.6 467.0,621.1 468.0,585.1 470.0,665.0 472.0,558.1 474.0,626.8 475.0,665.0 477.0,600.4 479.0,554.0 480.0,651.5 482.0,616.7 483.0,618.3 484.0,627.5 485.5,625.5 486.5,639.8 489.0,642.9 490.5,578.1 491.5,612.6 493.0,616.4 494.0,630.8 496.5,625.5 499.0,567.6 500.0,619.0 501.5,583.4 502.5,598.4 505.0,555.3 506.0,612.8 508.0,596.6 510.0,626.0 512.0,665.0 514.0,652.5 515.0,608.6 517.0,657.2 518.5,635.8 519.5,592.7 521.5,617.2 524.0,645.7 525.5,635.2 527.0,559.9 529.0,603.1 530.0,645.5 531.0,600.0 533.0,600.6 535.5,593.5 537.5,562.4 539.5,576.3 542.0,558.6 543.0,554.0 544.5,611.5 546.5,649.3 548.5,648.5 551.0,586.6 552.0,624.1 553.0,577.8 554.5,633.0 556.5,626.8 557.5,645.9 560.0,600.3 561.5,640.3 563.5,616.4 564.5,615.4 565.5,661.5 568.0,606.5 570.0,650.4 572.0,556.1 573.5,665.0 575.5,577.5 576.5,599.4 577.5,586.8 580.0,573.3 582.0,665.0 583.0,576.5 585.5,616.3 587.5,604.2 589.0,556.4 591.0,581.0 593.0,656.0 594.0,651.0 596.5,592.9 598.5,635.5 599.5,601.1 602.0,632.8 604.0,614.7 605.5,628.3 606.5,619.8 608.0,641.9 609.0,590.7 611.0,644.3 613.5,590.7 616.0,616.5 618.0,604.7 619.0,647.3 620.5,591.8 622.5,645.5 624.5,586.2 627.0,634.3 629.0,629.1 631.5,563.1 632.5,594.7 635.0,661.9 637.0,647.0 638.5,587.5 640.5,601.5 642.5,591.3 643.5,558.0 644.5,590.0 646.5,612.5 648.0,634.3 650.5,558.3 652.5,623.0 653.5,568.2 655.5,631.2 657.0,554.0 658.0,578.2 660.0,630.3 661.5,569.3 662.5,626.0 664.0,554.0 666.0,595.2 667.0,554.0 668.0,579.8 669.5,644.0 672.0,623.2 674.5,640.4 676.5,621.0 679.0,654.8 681.0,576.8 683.5,555.0 686.0,568.4 687.0,623.5 689.0,613.0 691.0,626.4 693.0,585.7 694.0,571.6 695.5,658.2 697.5,615.3 698.5,630.6 700.0,559.9 702.0,583.0 704.0,634.6 706.5,610.5 708.5,600.3 710.5,593.2 711.5,659.2 713.0,582.6 715.0,615.6 716.5,614.8 718.5,608.3 719.5,599.9 721.0,613.7 723.0,608.1 724.0,611.0 726.5,592.1 728.5,600.6 730.0,619.4 732.0,665.0 733.5,605.1 736.0,633.2 738.0,644.7 739.0,611.6 741.0,620.7 743.0,657.3 745.5,556.0 747.5,566.5 748.5,612.9 751.0,665.0 752.5,607.0 754.5,661.8 756.5,605.1 758.5,624.7 760.5,604.0 762.5,616.6 765.0,604.0 767.0,646.4 769.0,562.6 770.0,577.2 771.0,633.3 772.0,622.6 774.0,558.5 775.0,558.7 777.0,600.2 778.5,618.3 781.0,624.7 783.0,560.0 784.5,643.2 786.5,554.0 788.5,562.1 790.0,639.8 791.5,570.0 794.0,653.3 796.0,585.4 797.0,578.7 799.0,600.1 801.0,588.3 803.0,589.6 804.0,554.0 805.0,648.7 807.0,593.8 809.0,567.4 811.5,612.5 813.5,615.4 815.5,599.0 816.5,606.6 818.0,630.7 820.0,653.0 821.5,593.0 823.0,636.6 824.0,600.4 825.5,583.1 826.5,645.8 828.0,556.3 829.0,571.3 830.5,590.7 831.5,561.8 834.0,632.2 835.0,554.0 837.0,581.5 839.5,554.0 841.5,640.1 843.0,554.0 845.5,595.2 848.0,580.2 850.0,615.2 851.0,639.5 852.5,665.0 854.5,624.9 855.5,607.2 856.5,602.2 859.0,621.0" fill="none" stroke="#0000ff" stroke-width="1" stroke-linejoin="miter" shape-rendering="crispEdges" />
<line x1="860.5" y1="541" x2="860.5" y2="671" stroke="#ffffff" stroke-width="1" />
<rect x="405" y="482" width="482" height="1" fill="#5f5f5f" />
<rect x="891.5" y="53.5" width="127" height="195" fill="#808080" stroke="#000" stroke-width="1" />
<rect x="891.5" y="253.5" width="127" height="444" fill="#808080" stroke="#000" stroke-width="1" />
<text x="919.5" y="120.9" font-size="13" fill="#000" font-weight="bold" font-style="normal" text-anchor="start" textLength="71" lengthAdjust="spacingAndGlyphs" stroke="#000" stroke-width="0.3" >13.12.2012</text>
<text x="921.7" y="153.7" font-size="19" fill="#000" font-weight="bold" font-style="normal" text-anchor="start" textLength="76.2" lengthAdjust="spacingAndGlyphs" stroke="#000" stroke-width="0.35" >15:53:31</text>
<text x="934.4" y="310" font-size="13" fill="#111" font-weight="normal" font-style="italic" text-anchor="start" textLength="41.7" lengthAdjust="spacingAndGlyphs" >Время</text>
<rect x="913.5" y="316.5" width="83" height="15.5" fill="#ffffff" stroke="#5c5c5c" stroke-width="1" rx="2.5" />
<path d="M981.5,316.5 h12.5 a2.5,2.5 0 0 1 2.5,2.5 v10.5 a2.5,2.5 0 0 1 -2.5,2.5 h-12.5 z" fill="url(#btn)" stroke="#5c5c5c" stroke-width="1"/>
<rect x="981" y="317" width="1" height="15" fill="#c8c8c8" />
<polygon points="985,322 993,322 989,327" fill="#000"/>
<text x="916.5" y="328" font-size="9.6" fill="#000" font-weight="normal" font-style="normal" text-anchor="start" textLength="64" lengthAdjust="spacingAndGlyphs" >13.12.12 15:53:</text>
<rect x="914.5" y="334.5" width="38" height="17.5" fill="url(#btn)" stroke="#5c5c5c" stroke-width="1" rx="3" />
<text x="933.5" y="346.8" font-size="13" fill="#000" font-weight="bold" font-style="normal" text-anchor="middle" stroke="#000" stroke-width="0.2" >&lt;</text>
<rect x="956.5" y="334.5" width="38" height="17.5" fill="url(#btn)" stroke="#5c5c5c" stroke-width="1" rx="3" />
<text x="975.5" y="346.8" font-size="13" fill="#000" font-weight="bold" font-style="normal" text-anchor="middle" stroke="#000" stroke-width="0.2" >&gt;</text>
<rect x="914.5" y="356.5" width="38" height="17.5" fill="url(#btn)" stroke="#5c5c5c" stroke-width="1" rx="3" />
<text x="933.5" y="368.8" font-size="13" fill="#000" font-weight="bold" font-style="normal" text-anchor="middle" stroke="#000" stroke-width="0.2" >&lt;&lt;</text>
<rect x="956.5" y="356.5" width="38" height="17.5" fill="url(#btn)" stroke="#5c5c5c" stroke-width="1" rx="3" />
<text x="975.5" y="368.8" font-size="13" fill="#000" font-weight="bold" font-style="normal" text-anchor="middle" stroke="#000" stroke-width="0.2" >&gt;&gt;</text>
<rect x="914.5" y="379.5" width="81.5" height="17.5" fill="url(#btn)" stroke="#5c5c5c" stroke-width="1" rx="3" />
<text x="955.3" y="391" font-size="10" fill="#000" font-weight="bold" font-style="normal" text-anchor="middle" textLength="74" lengthAdjust="spacingAndGlyphs" stroke="#000" stroke-width="0.1" >Текущее время</text>
<rect x="914.5" y="402.5" width="81" height="31" fill="#808080" stroke="#000" stroke-width="1" />
<text x="954.5" y="414.5" font-size="11" fill="#111" font-weight="normal" font-style="normal" text-anchor="middle" textLength="54" lengthAdjust="spacingAndGlyphs" >13.12.2012</text>
<text x="954.5" y="427.6" font-size="11" fill="#111" font-weight="normal" font-style="normal" text-anchor="middle" textLength="54" lengthAdjust="spacingAndGlyphs" >15:53:31.0</text>
<rect x="920" y="438" width="11" height="11" fill="url(#btn)" stroke="#7a7a7a" stroke-width="0.8" />
<text x="936.8" y="446.8" font-size="11" fill="#111" font-weight="normal" font-style="normal" text-anchor="start" textLength="35" lengthAdjust="spacingAndGlyphs" >Спектр</text>
<text x="931" y="474.8" font-size="14" fill="#111" font-weight="normal" font-style="italic" text-anchor="start" textLength="49" lengthAdjust="spacingAndGlyphs" >Размер</text>
<rect x="913.5" y="480" width="56" height="16" fill="#ffffff" stroke="#5c5c5c" stroke-width="1" rx="2.5" />
<rect x="969.5" y="480" width="15" height="8" fill="url(#btn)" stroke="#5c5c5c" stroke-width="0.8" rx="1.5" />
<rect x="969.5" y="488" width="15" height="8" fill="url(#btn)" stroke="#5c5c5c" stroke-width="0.8" rx="1.5" />
<polygon points="973,486 981,486 977,482.5" fill="#000"/><polygon points="973,490 981,490 977,494" fill="#000"/>
<text x="918" y="491.9" font-size="11" fill="#111" font-weight="normal" font-style="normal" text-anchor="start" textLength="21" lengthAdjust="spacingAndGlyphs" >10,0</text>
<rect x="913.5" y="498.5" width="83" height="15.5" fill="url(#btn)" stroke="#5c5c5c" stroke-width="1" rx="2.5" />
<rect x="981.5" y="499" width="1" height="14.5" fill="#a8a8a8" />
<polygon points="985,504 993,504 989,509" fill="#000"/>
<text x="917" y="510" font-size="11" fill="#111" font-weight="normal" font-style="normal" text-anchor="start" >m</text>
<text x="936.9" y="537.8" font-size="14" fill="#111" font-weight="normal" font-style="italic" text-anchor="start" textLength="37.6" lengthAdjust="spacingAndGlyphs" >Архив</text>
<rect x="913.5" y="543.5" width="83" height="16" fill="url(#btn)" stroke="#5c5c5c" stroke-width="1" rx="2.5" />
<rect x="981.5" y="544" width="1" height="15" fill="#a8a8a8" />
<polygon points="985,549 993,549 989,554" fill="#000"/>
<text x="916" y="555" font-size="9" fill="#111" font-weight="normal" font-style="normal" text-anchor="start" textLength="12" lengthAdjust="spacingAndGlyphs" >All</text>
<rect x="912" y="563" width="86" height="1.5" fill="#000" />
<text x="954.8" y="572.5" font-size="11" fill="#111" font-weight="normal" font-style="normal" text-anchor="middle" textLength="32.4" lengthAdjust="spacingAndGlyphs" >Шкала</text>
<text x="955" y="585.2" font-size="11" fill="#111" font-weight="normal" font-style="normal" text-anchor="middle" textLength="61" lengthAdjust="spacingAndGlyphs" >100 % (0 %)</text>
<rect x="914.5" y="596.5" width="26" height="18" fill="url(#btn)" stroke="#5c5c5c" stroke-width="1" rx="3" />
<text x="927.5" y="610" font-size="15" fill="#000" font-weight="bold" font-style="normal" text-anchor="middle" stroke="#000" stroke-width="0.2" >+</text>
<rect x="914.5" y="618.5" width="26" height="18" fill="url(#btn)" stroke="#5c5c5c" stroke-width="1" rx="3" />
<text x="927.5" y="632" font-size="15" fill="#000" font-weight="bold" font-style="normal" text-anchor="middle" stroke="#000" stroke-width="0.2" >-</text>
<rect x="942.5" y="596.5" width="26" height="18" fill="url(#btn)" stroke="#5c5c5c" stroke-width="1" rx="3" />
<rect x="942.5" y="618.5" width="26" height="18" fill="url(#btn)" stroke="#5c5c5c" stroke-width="1" rx="3" />
<polygon points="950,608 960,608 955,603" fill="#333"/><polygon points="950,626 960,626 955,631" fill="#333"/>
<rect x="970.5" y="605.5" width="26" height="18.5" fill="url(#btn)" stroke="#5c5c5c" stroke-width="1" rx="3" />
<text x="983.5" y="619" font-size="11.5" fill="#000" font-weight="bold" font-style="normal" text-anchor="middle" stroke="#000" stroke-width="0.2" >1:1</text>
<rect x="875.5" y="706.5" width="116" height="32" fill="none" stroke="#a6a6a6" stroke-width="1" rx="2" />
<rect x="994.5" y="706.5" width="32" height="32" fill="none" stroke="#a6a6a6" stroke-width="1" rx="2" />
<defs><linearGradient id="pb" x1="0" y1="0" x2="0" y2="1"><stop offset="0" stop-color="#e8e8ee"/><stop offset="1" stop-color="#a8aab4"/></linearGradient><linearGradient id="kb" x1="0" y1="0" x2="0" y2="1"><stop offset="0" stop-color="#4c8ae8"/><stop offset="1" stop-color="#1c4aa8"/></linearGradient><linearGradient id="fold" x1="0" y1="0" x2="0" y2="1"><stop offset="0" stop-color="#a8d0f8"/><stop offset="1" stop-color="#5c9ae0"/></linearGradient><linearGradient id="scr" x1="0" y1="0" x2="1" y2="1"><stop offset="0" stop-color="#3a6aa8"/><stop offset="0.5" stop-color="#2a5088"/><stop offset="0.52" stop-color="#1a3868"/><stop offset="1" stop-color="#24487a"/></linearGradient><linearGradient id="pg" x1="0" y1="0" x2="0" y2="1"><stop offset="0" stop-color="#e8e8e8"/><stop offset="1" stop-color="#b8b8b8"/></linearGradient><linearGradient id="pg2" x1="0" y1="0" x2="0" y2="1"><stop offset="0" stop-color="#d0d0d0"/><stop offset="1" stop-color="#8a8a8a"/></linearGradient><radialGradient id="info" cx="0.5" cy="0.3" r="0.7"><stop offset="0" stop-color="#b8b8b8"/><stop offset="1" stop-color="#7a7a7a"/></radialGradient><radialGradient id="tip" cx="0.5" cy="0.3" r="0.7"><stop offset="0" stop-color="#f4f4f4"/><stop offset="1" stop-color="#a8a8a8"/></radialGradient><linearGradient id="lock" x1="0" y1="0" x2="0" y2="1"><stop offset="0" stop-color="#6a9ad8"/><stop offset="1" stop-color="#1f4f98"/></linearGradient><linearGradient id="pwr" x1="0" y1="0" x2="0" y2="1"><stop offset="0" stop-color="#f06048"/><stop offset="1" stop-color="#b01808"/></linearGradient></defs>
<rect x="889" y="714" width="8" height="8" fill="#f6f6f8" stroke="#b8b8c0" stroke-width="0.6" />
<rect x="885.5" y="719.5" width="15" height="8" fill="url(#pb)" stroke="#9a9aa4" stroke-width="0.7" rx="2.5" />
<rect x="889" y="722" width="8" height="2" fill="#2e8bf0" />
<rect x="888.5" y="726.5" width="9" height="3.5" fill="#fafafa" stroke="#b0b0b8" stroke-width="0.6" />
<polygon points="907,719 916,719 911.5,724" fill="#000"/>
<rect x="924.5" y="714.5" width="15" height="15" fill="#cfcfcf" stroke="#6a6a6a" stroke-width="0.8" />
<line x1="926" y1="717.5" x2="938" y2="717.5" stroke="#9a9a9a" stroke-width="0.8" />
<line x1="926" y1="720.5" x2="938" y2="720.5" stroke="#9a9a9a" stroke-width="0.8" />
<line x1="926" y1="723.5" x2="938" y2="723.5" stroke="#9a9a9a" stroke-width="0.8" />
<line x1="926" y1="726.5" x2="938" y2="726.5" stroke="#9a9a9a" stroke-width="0.8" />
<polygon points="931,718 940,723 931,728" fill="#f4e800" stroke="#444" stroke-width="0.6"/>
<polygon points="946,719 955,719 950.5,724" fill="#000"/>
<line x1="959.5" y1="711" x2="959.5" y2="733" stroke="#b0b0b0" stroke-width="1" />
<line x1="960.5" y1="711" x2="960.5" y2="733" stroke="#fafafa" stroke-width="1" />
<defs><radialGradient id="grn2" cx="0.45" cy="0.35" r="0.65"><stop offset="0" stop-color="#30e830"/><stop offset="1" stop-color="#009000"/></radialGradient></defs>
<circle cx="974.2" cy="721.8" r="8" fill="url(#grn2)"/>
<text x="996" y="728.5" font-size="14" fill="#ff2020" font-weight="normal" font-style="normal" text-anchor="start" textLength="25.5" lengthAdjust="spacingAndGlyphs" >root</text>
<rect x="0" y="739" width="1024" height="1" fill="#c8c8c8" />
<rect x="0" y="740" width="1024" height="1" fill="#1a1a1a" />
<rect x="0" y="741" width="1024" height="27" fill="url(#task)" />
<rect x="2.5" y="742.5" width="23" height="23" fill="url(#kb)" stroke="#1a3a80" stroke-width="1" rx="3.5" />
<circle cx="13" cy="755" r="6.5" fill="none" stroke="#fff" stroke-width="3" stroke-dasharray="2.2 1.6"/>
<circle cx="13" cy="755" r="4.5" fill="#2f64c8"/>
<text x="15.5" y="760.5" font-size="14" fill="#fff" font-weight="bold" font-style="normal" text-anchor="middle" >K</text>
<path d="M32.5,746 h8 l2,2 h13.5 v15 h-23.5 z" fill="url(#fold)" stroke="#6a9ad0" stroke-width="0.6"/>
<rect x="32.5" y="750" width="24" height="13" fill="#8cbef2" />
<rect x="64.5" y="746.5" width="22" height="16" fill="url(#scr)" stroke="#1a2a40" stroke-width="0.6" />
<rect x="65" y="761" width="21" height="1.5" fill="#101010" />
<circle cx="66.5" cy="748.5" r="0.8" fill="#e8e070"/><circle cx="66.5" cy="751.5" r="0.8" fill="#e8e070"/>
<rect x="94.5" y="742.5" width="13" height="9" fill="url(#pg)" stroke="#a8a8a8" stroke-width="0.8" rx="1" />
<rect x="94.5" y="756.5" width="13" height="9" fill="url(#pg2)" stroke="#9a9a9a" stroke-width="0.8" rx="1" />
<rect x="119.5" y="746.5" width="13" height="14.5" fill="#f0f4f8" stroke="#6a7a8a" stroke-width="0.8" rx="2" />
<rect x="121.5" y="749" width="9" height="4" fill="#3a8ae8" />
<rect x="121.5" y="755" width="9" height="4" fill="#3a8ae8" />
<rect x="124.5" y="748.5" width="3" height="1.5" fill="#fff" />
<rect x="124.5" y="754.5" width="3" height="1.5" fill="#fff" />
<text x="139" y="760.5" font-size="13" fill="#222" font-weight="normal" font-style="normal" text-anchor="start" textLength="46" lengthAdjust="spacingAndGlyphs" >Dolphin</text>
<rect x="268" y="745" width="11" height="9" fill="#f8f8f8" stroke="#777" stroke-width="0.8" rx="2" />
<rect x="265" y="754" width="14" height="4" fill="#e0e0e0" stroke="#777" stroke-width="0.6" />
<text x="282.5" y="760.5" font-size="13" fill="#222" font-weight="normal" font-style="normal" text-anchor="start" textLength="121" lengthAdjust="spacingAndGlyphs" >Modbus RTU RS485</text>
<defs><linearGradient id="act" x1="0" y1="0" x2="0" y2="1"><stop offset="0" stop-color="#aeadaa"/><stop offset="1" stop-color="#c6c5c2"/></linearGradient></defs>
<rect x="408.5" y="742.5" width="191" height="24" fill="url(#act)" stroke="#8a8986" stroke-width="1" rx="3" />
<text x="426" y="760" font-size="13" fill="#222" font-weight="normal" font-style="normal" text-anchor="start" >C</text>
<rect x="405" y="755" width="5" height="1" fill="#333" />
<circle cx="420" cy="754" r="7.5" fill="#3a5fbf" stroke="#223" stroke-width="0.8"/>
<rect x="414" y="750" width="8" height="5" fill="#222" />
<rect x="415" y="751" width="6" height="3" fill="#30d030" />
<line x1="414" y1="761" x2="427" y2="748" stroke="#d8c070" stroke-width="2" />
<circle cx="416" cy="758" r="3" fill="#c8d470"/>
<text x="432.4" y="760.2" font-size="13" fill="#111" font-weight="normal" font-style="normal" text-anchor="start" textLength="70.5" lengthAdjust="spacingAndGlyphs" >Openscada</text>
<text x="592" y="763.5" font-size="10" fill="#222" font-weight="normal" font-style="normal" text-anchor="middle" >3</text>
<polygon points="589,751 595,751 592,747.5" fill="none" stroke="#444" stroke-width="0.9"/>
<polygon points="296,751 302,751 299,747.5" fill="none" stroke="#444" stroke-width="0.9"/>
<text x="299" y="763.5" font-size="10" fill="#222" font-weight="normal" font-style="normal" text-anchor="middle" >2</text>
<line x1="719.5" y1="741" x2="719.5" y2="768" stroke="#9a9a9a" stroke-width="1" />
<circle cx="716" cy="754" r="9.5" fill="url(#tip)" stroke="#8a8a8a" stroke-width="0.8"/>
<path d="M714,749.5 l4.5,4.5 l-4.5,4.5" fill="none" stroke="#000" stroke-width="2.2"/>
<line x1="742" y1="764" x2="750" y2="754" stroke="#8a8a8a" stroke-width="1.6" />
<circle cx="747" cy="758" r="2" fill="#a8a8a8"/>
<rect x="753" y="744" width="8" height="8" fill="#fafafa" stroke="#bbb" stroke-width="0.6" />
<rect x="754.5" y="746" width="5" height="4" fill="#333" />
<rect x="767" y="748" width="21" height="13.5" fill="#a4a4a4" />
<text x="777.5" y="758.5" font-size="10" fill="#fff" font-weight="bold" font-style="normal" text-anchor="middle" stroke="#000" stroke-width="0.6" paint-order="stroke">ru</text>
<rect x="794.5" y="745.5" width="12" height="16" fill="#f8e8a8" stroke="#c8a030" stroke-width="1" />
<path d="M799.5,750.5 h9 l4,4 v10 h-13 z" fill="#f6f6f6" stroke="#a8a8a8" stroke-width="0.8"/>
<polygon points="820,750 825,750 831,745 831,764 825,759 820,759" fill="#d8d8d8" stroke="#888" stroke-width="0.8"/>
<rect x="820" y="750" width="4" height="9" fill="#f0b020" />
<path d="M834,750 q3,4 0,8 M837,747 q5,7 0,14 M840,745 q7,9 0,18" fill="none" stroke="#4cc83c" stroke-width="1.3"/>
<rect x="850.5" y="746.5" width="19" height="13" fill="#e8eef4" stroke="#888" stroke-width="0.8" rx="2" />
<rect x="852.5" y="748.5" width="15" height="9" fill="#2a8ae8" />
<line x1="855" y1="753.5" x2="865" y2="753.5" stroke="#fff" stroke-width="1" />
<rect x="856" y="760" width="8" height="3" fill="#ccc" />
<circle cx="892.2" cy="754" r="10" fill="url(#info)"/>
<text x="892.2" y="760.5" font-size="15" fill="#f4f4f4" font-weight="bold" font-style="normal" text-anchor="middle" style="font-family:'Liberation Serif', serif">i</text>
<line x1="906.5" y1="741" x2="906.5" y2="768" stroke="#a0a0a0" stroke-width="1" />
<text x="913.7" y="760.9" font-size="17" fill="#111" font-weight="normal" font-style="normal" text-anchor="start" textLength="49.6" lengthAdjust="spacingAndGlyphs" >15:53</text>
<rect x="972.5" y="743.5" width="22" height="22" fill="url(#lock)" stroke="#1f3f7a" stroke-width="1" rx="3" />
<path d="M976.5,759 v-3.5 a6.5,6.5 0 0 1 13,0 v3.5 z" fill="#8fb4e4" stroke="#fff" stroke-width="2"/>
<rect x="976" y="757" width="14" height="5" fill="#f4f4f4" />
<rect x="999.5" y="743.5" width="22" height="22" fill="url(#pwr)" stroke="#7a1a10" stroke-width="1" rx="3" />
<path d="M1006.5,749.5 a6.5,6.5 0 1 0 8,0" fill="none" stroke="#fff" stroke-width="2.5"/>
<line x1="1010.5" y1="745.5" x2="1010.5" y2="754" stroke="#fff" stroke-width="2.5" />
<text x="352.5" y="684.3" font-size="80" fill="#ffffff" fill-opacity="0.35" textLength="317" lengthAdjust="spacingAndGlyphs">elevel.by</text>
</svg></body></html>
